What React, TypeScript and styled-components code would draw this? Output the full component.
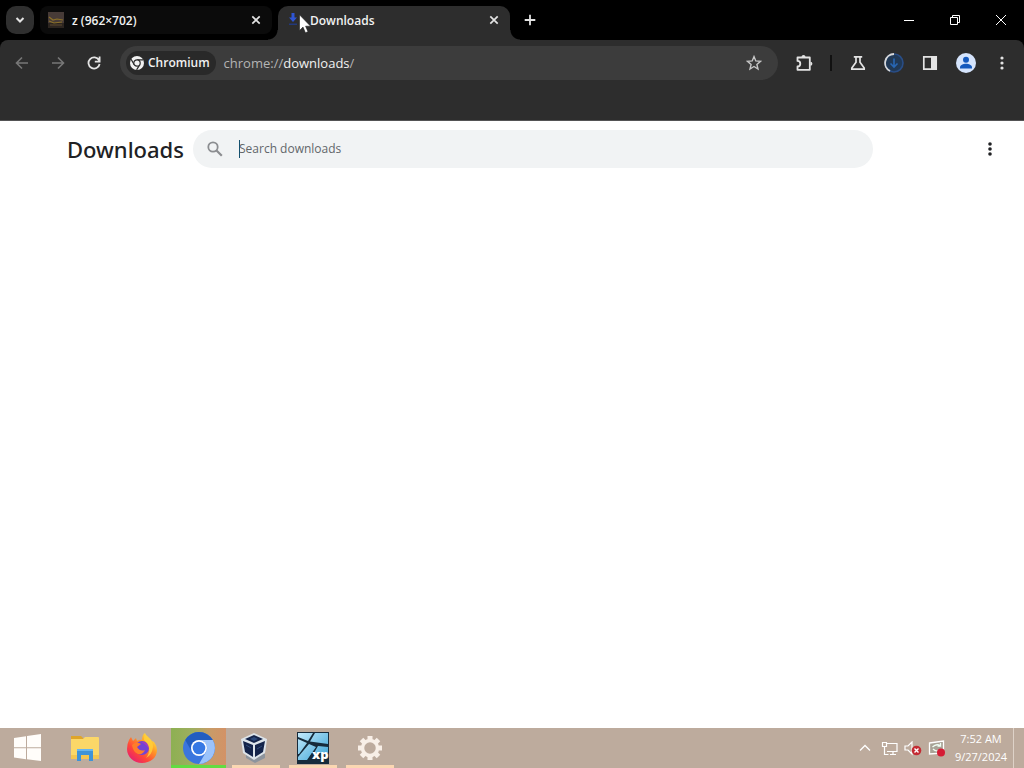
import React from "react";
import styled, { createGlobalStyle } from "styled-components";

const GlobalStyle = createGlobalStyle`
  * { box-sizing: border-box; }
  body { margin: 0; background: #fff; font-family: "Open Sans", "Noto Sans", sans-serif; }
  button, input { font: inherit; }
  svg { display: block; flex: none; }
`;

const Desktop = styled.div`
  display: flex;
  flex-direction: column;
  min-height: 100vh;
`;

const IconButton = styled.button<{ $w: number; $h: number; $color?: string }>`
  display: flex;
  align-items: center;
  justify-content: center;
  flex: none;
  width: ${(p) => p.$w}px;
  height: ${(p) => p.$h}px;
  padding: 0;
  border: 0;
  background: transparent;
  color: ${(p) => p.$color || "#e3e3e3"};
`;

const TabStrip = styled.header`
  display: flex;
  align-items: flex-start;
  height: 40px;
  padding-left: 6px;
  background: #000;
`;

const TabSearch = styled(IconButton)`
  margin: 6px 6px 0 0;
  border-radius: 10px;
  background: #2f2f2f;
`;

const Tab = styled.div<{ $active?: boolean }>`
  position: relative;
  display: flex;
  align-items: center;
  flex: 0 1 232px;
  height: ${(p) => (p.$active ? 34 : 28)}px;
  margin-top: 6px;
  margin-right: 6px;
  padding: 0 6px 0 8px;
  padding-bottom: ${(p) => (p.$active ? 6 : 0)}px;
  border-radius: ${(p) => (p.$active ? "10px 10px 0 0" : "8px")};
  background: ${(p) => (p.$active ? "#2d2d2d" : "#0b0b0b")};
  &::before,
  &::after {
    content: ${(p) => (p.$active ? '""' : "none")};
    position: absolute;
    bottom: 0;
    width: 10px;
    height: 10px;
  }
  &::before {
    right: 100%;
    background: radial-gradient(circle at 0 0, transparent 9px, #2d2d2d 10px);
  }
  &::after {
    left: 100%;
    background: radial-gradient(circle at 100% 0, transparent 9px, #2d2d2d 10px);
  }
`;

const TabTitle = styled.span`
  flex: 1;
  margin-left: 8px;
  padding-top: 2px;
  font-size: 12px;
  line-height: 16px;
  font-weight: 600;
  color: #f1f1f1;
  white-space: nowrap;
`;

const Pointer = styled.svg`
  position: absolute;
  left: 21px;
  top: 8px;
`;

const WindowButtons = styled.div`
  display: flex;
  margin-left: auto;
`;

const Toolbar = styled.div`
  background: #000;
`;

const ToolbarSurface = styled.div`
  display: flex;
  align-items: flex-start;
  height: 81px;
  padding: 5px 4px 0;
  border-bottom: 1px solid #545355;
  border-radius: 8px 8px 0 0;
  background: #2d2d2d;
`;

const AddressBar = styled.div`
  display: flex;
  align-items: center;
  flex: 1;
  height: 34px;
  margin: 1px 8px 0;
  padding: 0 6px;
  border-radius: 17px;
  background: #3c3c3c;
`;

const SiteChip = styled.button`
  display: flex;
  align-items: center;
  gap: 4px;
  height: 24px;
  padding: 0 6px 0 4px;
  border: 0;
  border-radius: 12px;
  background: #292929;
  color: #f1f1f1;
  font-size: 12px;
  line-height: 18px;
  font-weight: 600;
`;

const Address = styled.div`
  flex: 1;
  margin-left: 8px;
  color: #b4b4b4;
  font-size: 13px;
  line-height: 20px;
  strong { font-weight: 400; color: #f1f1f1; }
`;

const Divider = styled.span`
  width: 2px;
  height: 16px;
  margin: 10px 8px 0;
  background: #111;
`;

const Page = styled.main`
  flex: 1;
  background: #fff;
`;

const PageHeader = styled.div`
  display: flex;
  align-items: center;
  height: 56px;
  padding: 0 18px 0 67px;
`;

const Heading = styled.h1`
  min-width: 126px;
  margin: 0;
  font-family: "Noto Sans", "Open Sans", sans-serif;
  font-size: 22px;
  line-height: 28px;
  font-weight: 500;
  color: #202124;
`;

const SearchField = styled.label`
  position: relative;
  display: flex;
  align-items: center;
  flex: 0 1 680px;
  height: 38px;
  padding: 0 12px;
  border-radius: 19px;
  background: #f1f3f4;
  input {
    flex: 1;
    min-width: 0;
    margin-left: 14px;
    padding: 0;
    border: 0;
    outline: 0;
    background: transparent;
    font-size: 12px;
    line-height: 20px;
    color: #202124;
  }
  input::placeholder { color: #62666a; opacity: 1; }
`;

const Caret = styled.span`
  position: absolute;
  left: 46px;
  top: 10px;
  width: 1px;
  height: 18px;
  background: #14506e;
`;

const PageMenu = styled(IconButton)`
  margin-left: auto;
`;

const Taskbar = styled.footer`
  display: flex;
  align-items: center;
  gap: 2px;
  height: 40px;
  background: #bdab9d;
`;

const TaskButton = styled.button<{ $state?: "open" | "active" }>`
  display: flex;
  align-items: center;
  justify-content: center;
  flex: none;
  width: 55px;
  height: 40px;
  padding: 0;
  border: 0;
  background: ${(p) =>
    p.$state === "active"
      ? "linear-gradient(#62dc42, #62dc42) bottom / 100% 3px no-repeat, linear-gradient(90deg, #8db052 0%, #9fae60 40%, #c99b68 72%, #d39266 100%)"
      : p.$state === "open"
      ? "linear-gradient(#fbd7b2, #fbd7b2) bottom / 48px 3px no-repeat"
      : "transparent"};
`;

const Tray = styled.div`
  display: flex;
  align-items: center;
  height: 40px;
  margin-left: auto;
`;

const Clock = styled.button`
  width: 64px;
  height: 40px;
  padding: 0 0 1px;
  border: 0;
  background: transparent;
  color: #fff;
  font-size: 11px;
  line-height: 18px;
  text-align: center;
  white-space: nowrap;
  span { display: block; }
`;

const ShowDesktop = styled.button`
  width: 11px;
  height: 40px;
  padding: 0;
  border: 0;
  border-left: 1px solid #ded2c8;
  background: transparent;
`;

const CloseIcon = () => (
  <svg width="10" height="10" viewBox="0 0 10 10" fill="none" stroke="currentColor" strokeWidth="1.7">
    <path d="M1.3 1.3l7.4 7.4M8.7 1.3L1.3 8.7" />
  </svg>
);

const ArrowIcon = ({ flip }: { flip?: boolean }) => (
  <svg width="14" height="14" viewBox="0 0 14 14" fill="none" stroke="currentColor" strokeWidth="1.6">
    <path d={flip ? "M1 7h11M7 1.5L12.5 7 7 12.5" : "M13 7H2M7 1.5L1.5 7 7 12.5"} />
  </svg>
);

const DotsIcon = ({ r, gap }: { r: number; gap: number }) => (
  <svg width="16" height="16" viewBox="0 0 16 16" fill="currentColor">
    <circle cx="8" cy={8 - gap} r={r} />
    <circle cx="8" cy="8" r={r} />
    <circle cx="8" cy={8 + gap} r={r} />
  </svg>
);

const ImageFavicon = () => (
  <svg width="16" height="16" viewBox="0 0 16 16">
    <path fill="#473b37" d="M0 0h16v16H0z" />
    <path fill="#2c2520" d="M0 11h16v5H0z" />
    <path d="M1 5l4 3 4-1 6 1M1 9l5 2 8-1" fill="none" stroke="#8c7128" strokeWidth="1.2" />
    <path d="M2 13h12" stroke="#5c4b30" />
  </svg>
);

const DownloadFavicon = () => (
  <svg width="16" height="16" viewBox="0 0 16 16">
    <path fill="#2f55d4" d="M5.500 1h3v4.500H11L7 10 3 5.500h2.500z" />
    <path fill="#22397c" d="M3 11.500h8v1.500H3z" />
  </svg>
);

const ChromiumMark = () => (
  <svg width="14" height="14" viewBox="0 0 14 14">
    <circle cx="7" cy="7" r="7" fill="#f1f1f1" />
    <path d="M7 3.8h6.2M4.2 8.6L1.1 3.3M9.8 8.6l-3.2 5.3" stroke="#292929" strokeWidth="1.2" />
    <circle cx="7" cy="7" r="3.2" fill="#f1f1f1" stroke="#292929" strokeWidth="1.2" />
  </svg>
);

const FolderIcon = () => (
  <svg width="30" height="28" viewBox="0 0 30 28">
    <path fill="#dfa52a" d="M1 2h10l3 3h-13z" />
    <path fill="#fbd768" d="M1 5h12l2-2h13q1 0 1 1v21H1z" />
    <path fill="#f4c550" d="M1 21h28v4H1z" />
    <path fill="#3f93d8" d="M7 27V16q0-1 1-1h14q1 0 1 1v11h-4v-6h-8v6z" />
    <path fill="#68b5ee" d="M7 15h16v2H7z" />
  </svg>
);

const FirefoxIcon = () => (
  <svg width="32" height="32" viewBox="0 0 32 32">
    <defs>
      <linearGradient id="fox" x1="0.9" y1="0.1" x2="0.2" y2="0.95">
        <stop offset="0" stopColor="#fff044" />
        <stop offset="0.35" stopColor="#ff9a26" />
        <stop offset="0.7" stopColor="#ff4639" />
        <stop offset="1" stopColor="#e7206f" />
      </linearGradient>
    </defs>
    <path fill="url(#fox)" d="M3 8l2-3 2 4 3-3 1 3q3-2 5-1c0-3 1-6 3-7 1 4 5 5 7 8l2 1q3 4 3 8C31 26 24 31 16 31S1 25 1 17q0-5 2-9z" />
    <circle cx="16" cy="16" r="7" fill="#7443d4" />
    <path fill="#ff7d2a" d="M6 13q4-4 9-1l-4 3q3 5 8 3-2 5-7 4-5-2-6-9z" />
    <path fill="#a73dbd" d="M15 10q8-1 8 7-3-5-8-7z" />
    <path fill="#ffd13b" d="M19 2q8 6 8 13-1 8-7 11 4-5 3-10-1-5-5-8 0-4 1-6z" opacity=".8" />
  </svg>
);

const ChromiumIcon = () => (
  <svg width="32" height="32" viewBox="0 0 32 32">
    <circle cx="16" cy="16" r="16" fill="#3b76de" />
    <path fill="#235dc0" d="M2.2 8A16 16 0 0 1 29.8 8H16a8 8 0 0 0-7 12z" />
    <path fill="#9bc3fb" d="M29.8 8A16 16 0 0 1 16 32l7-12a8 8 0 0 0-7-12z" />
    <circle cx="16" cy="16" r="8" fill="#fff" />
    <circle cx="16" cy="16" r="6.3" fill="#3678e4" />
  </svg>
);

const BoxIcon = () => (
  <svg width="30" height="32" viewBox="0 0 30 32">
    <path fill="#8d949d" d="M5 22l9-3 10 3v4l-10 5-9-5z" />
    <path fill="#dde4ea" d="M13 1l13 6-2 14-11 7-11-7L0 7z" />
    <path fill="#14244a" d="M13 3l9 4-9 4-9-4zM2 9l10 4v12l-8-5zM24 9l-10 4v12l8-5z" />
    <path fill="#2c4a7c" d="M9 7l4-2 4 2-4 2z" />
    <path d="M16 17l5-3M5 13l5 3" stroke="#304a78" />
  </svg>
);

const XpIcon = () => (
  <svg width="32" height="32" viewBox="0 0 32 32">
    <defs>
      <linearGradient id="pane" x1="0" y1="0" x2="1" y2="1">
        <stop offset="0" stopColor="#c2e9fb" />
        <stop offset="1" stopColor="#3aa3d6" />
      </linearGradient>
    </defs>
    <path fill="#172b3b" d="M0 0h32v32H0z" />
    <path fill="url(#pane)" d="M1 1h15l-5 8L1 5zM18 1h13v11L13 9.500zM1 7l9 4-8 11H1zM12 12l7 3-9 13H1v-3zM21 14l10 1v6H17z" />
    <path fill="#172b3b" d="M11 28l4-7h16v10H11z" />
    <text x="15" y="27" fill="#fff" fontFamily="Open Sans, sans-serif" fontSize="13" fontWeight="800">xp</text>
  </svg>
);

const GearIcon = () => (
  <svg width="26" height="26" viewBox="0 0 26 26" fill="none" stroke="#f8efe7">
    <circle cx="13" cy="13" r="7.500" strokeWidth="3.500" />
    {[0, 45, 90, 135, 180, 225, 270, 315].map((a) => (
      <path key={a} d="M13 1v4.500" strokeWidth="5" transform={`rotate(${a} 13 13)`} />
    ))}
  </svg>
);

const BrowserTabs = () => (
  <TabStrip>
    <TabSearch $w={28} $h={28} aria-label="Search tabs">
      <svg width="10" height="8" viewBox="0 0 10 8" fill="none" stroke="currentColor" strokeWidth="2">
        <path d="M1.5 2L5 5.5 8.5 2" />
      </svg>
    </TabSearch>
    <Tab>
      <ImageFavicon />
      <TabTitle>z (962×702)</TabTitle>
      <IconButton $w={20} $h={20} aria-label="Close z"><CloseIcon /></IconButton>
    </Tab>
    <Tab $active>
      <DownloadFavicon />
      <TabTitle>Downloads</TabTitle>
      <IconButton $w={20} $h={20} aria-label="Close Downloads"><CloseIcon /></IconButton>
      <Pointer width="13" height="20" viewBox="0 0 13 20">
        <path fill="#fff" stroke="#222" strokeWidth=".6" d="M.5.8v15.7l3.5-3.4 2.4 5.7 2.6-1.1-2.4-5.5h5z" />
      </Pointer>
    </Tab>
    <IconButton $w={28} $h={40} aria-label="New tab">
      <svg width="12" height="12" viewBox="0 0 12 12" stroke="currentColor" strokeWidth="1.8">
        <path d="M6 .7v10.6M.7 6h10.6" />
      </svg>
    </IconButton>
    <WindowButtons>
      <IconButton $w={46} $h={40} $color="#fff" aria-label="Minimize">
        <svg width="10" height="10" viewBox="0 0 10 10"><path d="M0 5.5h10" stroke="currentColor" /></svg>
      </IconButton>
      <IconButton $w={46} $h={40} $color="#fff" aria-label="Restore">
        <svg width="10" height="10" viewBox="0 0 10 10" fill="none" stroke="currentColor">
          <path d="M.5 2.5h7v7h-7zM2.5 2.5v-2h7v7h-2" />
        </svg>
      </IconButton>
      <IconButton $w={46} $h={40} $color="#fff" aria-label="Close">
        <svg width="12" height="12" viewBox="0 0 12 12" stroke="currentColor"><path d="M1 1l10 10M11 1L1 11" /></svg>
      </IconButton>
    </WindowButtons>
  </TabStrip>
);

const BrowserToolbar = () => (
  <Toolbar>
    <ToolbarSurface>
      <IconButton $w={36} $h={36} $color="#777" aria-label="Back"><ArrowIcon /></IconButton>
      <IconButton $w={36} $h={36} $color="#777" aria-label="Forward"><ArrowIcon flip /></IconButton>
      <IconButton $w={36} $h={36} aria-label="Reload">
        <svg width="14" height="14" viewBox="0 0 14 14" fill="none" stroke="currentColor" strokeWidth="1.8">
          <path d="M12 4.2A5.6 5.6 0 1 0 12.6 8M12.6.6v5H7.8" />
        </svg>
      </IconButton>
      <AddressBar>
        <SiteChip><ChromiumMark />Chromium</SiteChip>
        <Address>chrome://<strong>downloads</strong>/</Address>
        <IconButton $w={36} $h={34} $color="#c7c7c7" aria-label="Bookmark this page">
          <svg width="16" height="16" viewBox="0 0 16 16" fill="none" stroke="currentColor" strokeWidth="1.4">
            <path d="M8 1.6l1.8 4.3 4.7.4-3.6 3.1 1.1 4.6L8 11.5 4 14l1.1-4.6-3.6-3.1 4.7-.4z" />
          </svg>
        </IconButton>
      </AddressBar>
      <IconButton $w={36} $h={36} aria-label="Extensions">
        <svg width="18" height="18" viewBox="0 0 18 18" fill="none" stroke="currentColor" strokeWidth="1.800">
          <path d="M2.500 3.500h12.300v12.300H2.500v-3.300a2.800 2.800 0 0 0 0-5.600z" strokeLinejoin="round" />
          <path fill="currentColor" stroke="none" d="M6.500 3a2 2 0 0 1 4 0zM15.400 7.800a2 2 0 0 1 0 4z" />
        </svg>
      </IconButton>
      <Divider />
      <IconButton $w={36} $h={36} aria-label="Experiments">
        <svg width="16" height="16" viewBox="0 0 16 16" fill="none" stroke="currentColor" strokeWidth="1.7">
          <path d="M3.8 1.9h8.4M6 2v5.2L1.8 13v1.1h12.4V13L10 7.2V2" />
        </svg>
      </IconButton>
      <IconButton $w={36} $h={36} aria-label="Downloads">
        <svg width="20" height="20" viewBox="0 0 20 20" fill="none">
          <circle cx="10" cy="10" r="9" fill="#213956" stroke="#294d86" strokeWidth="1.6" />
          <path d="M10 1A9 9 0 0 0 6 18" stroke="#d8d8d8" strokeWidth="1.8" />
          <path d="M10 5.5v8M6.5 10.5L10 14l3.5-3.5" stroke="#2867b5" strokeWidth="1.6" />
        </svg>
      </IconButton>
      <IconButton $w={36} $h={36} aria-label="Side panel">
        <svg width="16" height="16" viewBox="0 0 16 16">
          <path d="M1.8 1.9h12.4v12.2H1.8z" fill="none" stroke="currentColor" strokeWidth="1.7" />
          <path d="M9 2h5v12H9z" fill="currentColor" />
        </svg>
      </IconButton>
      <IconButton $w={36} $h={36} aria-label="Profile">
        <svg width="20" height="20" viewBox="0 0 20 20">
          <circle cx="10" cy="10" r="10" fill="#d5e4fc" />
          <circle cx="10" cy="6.8" r="3" fill="#1459bd" />
          <path fill="#1459bd" d="M4 15.5v-1.2c0-2.2 3.2-3.5 6-3.5s6 1.3 6 3.5v1.2z" />
        </svg>
      </IconButton>
      <IconButton $w={36} $h={36} aria-label="Browser menu"><DotsIcon r={1.6} gap={5} /></IconButton>
    </ToolbarSurface>
  </Toolbar>
);

const trayIcons = {
  hidden: (
    <svg width="12" height="8" viewBox="0 0 12 8" fill="none" stroke="#fff" strokeWidth="1.3"><path d="M1 6.5l5-5 5 5" /></svg>
  ),
  network: (
    <svg width="17" height="15" viewBox="0 0 17 15" fill="none" stroke="#fff" strokeWidth="1.2">
      <path d="M6 2.5h10v8H6M9 13.5h6M12 10.5v3M1.5 1.5h4v4h-4zM3.5 5.5v8h4" />
    </svg>
  ),
  volume: (
    <svg width="18" height="15" viewBox="0 0 18 15">
      <path d="M1 5h3l4-4v12L4 9H1z" fill="none" stroke="#fff" strokeWidth="1.2" />
      <circle cx="12.5" cy="9.5" r="4.8" fill="#c42b33" />
      <path d="M10.5 7.5l4 4M14.5 7.5l-4 4" stroke="#fff" strokeWidth="1.4" />
    </svg>
  ),
  security: (
    <svg width="18" height="17" viewBox="0 0 18 17">
      <path d="M1.5 3l14-2v12l-14 1z" fill="#a9a396" stroke="#fff" strokeWidth="1.3" />
      <path d="M4.5 7q4-4 8-1M12.5 3v3H9.500M5 9q3 3 6 1" fill="none" stroke="#f0fff4" strokeWidth="1.3" />
      <circle cx="13" cy="12.500" r="4" fill="#d51c35" />
    </svg>
  ),
};

const SystemTaskbar = () => (
  <Taskbar>
    <TaskButton aria-label="Start">
      <svg width="28" height="28" viewBox="0 0 28 28" fill="#fffdfa">
        <path d="M0 4l12-1.7V13.300H0zM13 2.100L27 0v13.300H13zM0 14.300h12v11L0 23.600zM13 14.300h14V27l-14-1.700z" />
      </svg>
    </TaskButton>
    <TaskButton aria-label="File Explorer"><FolderIcon /></TaskButton>
    <TaskButton aria-label="Firefox"><FirefoxIcon /></TaskButton>
    <TaskButton $state="active" aria-label="Chromium"><ChromiumIcon /></TaskButton>
    <TaskButton $state="open" aria-label="VirtualBox"><BoxIcon /></TaskButton>
    <TaskButton $state="open" aria-label="Virtual machine"><XpIcon /></TaskButton>
    <TaskButton $state="open" aria-label="Settings"><GearIcon /></TaskButton>
    <Tray>
      <IconButton $w={24} $h={40} aria-label="Show hidden icons">{trayIcons.hidden}</IconButton>
      <IconButton $w={24} $h={40} aria-label="Network">{trayIcons.network}</IconButton>
      <IconButton $w={24} $h={40} aria-label="Volume">{trayIcons.volume}</IconButton>
      <IconButton $w={24} $h={40} aria-label="Security">{trayIcons.security}</IconButton>
      <Clock><span>7:52 AM</span><span>9/27/2024</span></Clock>
      <ShowDesktop aria-label="Show desktop" />
    </Tray>
  </Taskbar>
);

export default function App() {
  return (
    <Desktop>
      <GlobalStyle />
      <BrowserTabs />
      <BrowserToolbar />
      <Page>
        <PageHeader>
          <Heading>Downloads</Heading>
          <SearchField>
            <svg width="20" height="20" viewBox="0 0 20 20" fill="none" stroke="#8b8d90" strokeWidth="1.8">
              <circle cx="8" cy="8" r="4.7" />
              <path d="M11.5 11.5l5.3 5.3" strokeWidth="2.2" />
            </svg>
            <input type="search" aria-label="Search downloads" placeholder="Search downloads" />
            <Caret />
          </SearchField>
          <PageMenu $w={32} $h={32} $color="#202124" aria-label="More actions"><DotsIcon r={1.8} gap={5} /></PageMenu>
        </PageHeader>
      </Page>
      <SystemTaskbar />
    </Desktop>
  );
}
